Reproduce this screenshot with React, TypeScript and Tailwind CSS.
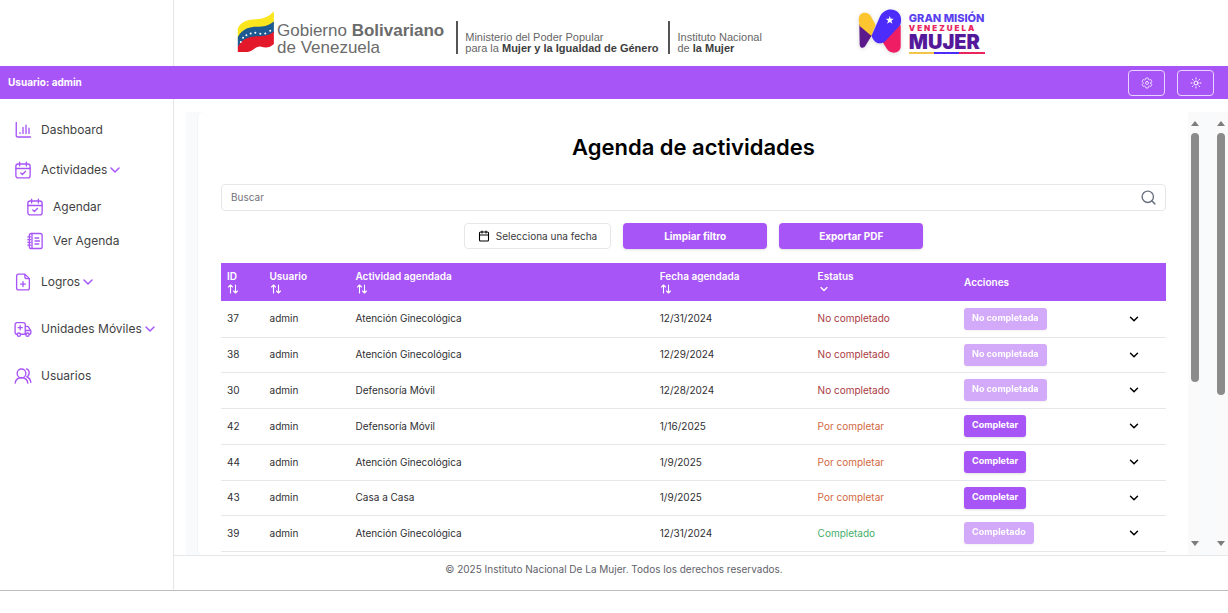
import type { ReactNode } from "react";
import { Calendar, ChevronDown, Search, Sun } from "lucide-react";
import { IoSettingsOutline } from "react-icons/io5";

type Status = "No completado" | "Por completar" | "Completado";

const rows: { id: number; activity: string; date: string; status: Status }[] = [
  { id: 37, activity: "Atención Ginecológica", date: "12/31/2024", status: "No completado" },
  { id: 38, activity: "Atención Ginecológica", date: "12/29/2024", status: "No completado" },
  { id: 30, activity: "Defensoría Móvil", date: "12/28/2024", status: "No completado" },
  { id: 42, activity: "Defensoría Móvil", date: "1/16/2025", status: "Por completar" },
  { id: 44, activity: "Atención Ginecológica", date: "1/9/2025", status: "Por completar" },
  { id: 43, activity: "Casa a Casa", date: "1/9/2025", status: "Por completar" },
  { id: 39, activity: "Atención Ginecológica", date: "12/31/2024", status: "Completado" },
];

const statusColor: Record<Status, string> = {
  "No completado": "text-[#a93b42]",
  "Por completar": "text-[#d2683f]",
  Completado: "text-[#43ad68]",
};

const actionLabel: Record<Status, string> = {
  "No completado": "No completada",
  "Por completar": "Completar",
  Completado: "Completado",
};

function LineIcon({ children }: { children: ReactNode }) {
  return (
    <svg
      viewBox="0 0 24 24"
      className="size-[18px] shrink-0 text-[#a855f7]"
      fill="none"
      stroke="currentColor"
      strokeWidth="1.8"
      strokeLinecap="round"
      strokeLinejoin="round"
      aria-hidden="true"
    >
      {children}
    </svg>
  );
}

const ChartIcon = () => (
  <LineIcon>
    <path d="M3 2v17.5a1.8 1.8 0 0 0 1.8 1.8H22M8 16.5v-1M12 16.5v-8M16 16.5v-11M20 16.5v-7" />
  </LineIcon>
);
const CalendarCheckIcon = () => (
  <LineIcon>
    <rect x="2.5" y="4" width="19" height="18.5" rx="3" />
    <path d="M2.5 10h19M7.5 1.5v5M16.5 1.5v5M9 16l2.2 2 4-4" />
  </LineIcon>
);
const NotebookIcon = () => (
  <LineIcon>
    <rect x="4.5" y="2" width="17" height="20" rx="2.5" />
    <path d="M8 2v20M2.5 6.5h3.5M2.5 10.2h3.5M2.5 13.8h3.5M2.5 17.5h3.5M12 8h5M12 12h6M12 16h5" />
  </LineIcon>
);
const FilePlusIcon = () => (
  <LineIcon>
    <path d="M14.5 1.5H6A2.5 2.5 0 0 0 3.5 4v16A2.5 2.5 0 0 0 6 22.5h12a2.5 2.5 0 0 0 2.5-2.5V7.5zM14.5 1.5V5A2.5 2.5 0 0 0 17 7.5h3.5M12 11.5V18M8.8 14.8h6.4" />
  </LineIcon>
);
const AmbulanceIcon = () => (
  <LineIcon>
    <path d="M4 19h-.5a2 2 0 0 1-2-2V6A2.5 2.5 0 0 1 4 3.5h8.5A2.5 2.5 0 0 1 15 6v13M9 19h7M15 8.5h2.5a2.5 2.5 0 0 1 2.1 1.2l2.6 4.3c.2.4.3.8.3 1.2V17a2 2 0 0 1-2 2M15 14h7M8.2 7.5V13M5.5 10.2H11" />
    <circle cx="6.5" cy="19.5" r="2.2" />
    <circle cx="18" cy="19.5" r="2.2" />
  </LineIcon>
);
const UsersIcon = () => (
  <LineIcon>
    <circle cx="10" cy="8.5" r="5.8" />
    <path d="M1.5 21.5c.6-4 3.8-7.2 8.5-7.2s7.9 3.2 8.5 7.2M16.5 2.5c4.8 1.3 5 8.5.5 10.5 3 1.2 5 4 5.5 7.5" />
  </LineIcon>
);

function NavItem({
  icon,
  label,
  expandable,
  className,
}: {
  icon: ReactNode;
  label: string;
  expandable?: boolean;
  className: string;
}) {
  const content = (
    <>
      {icon}
      <span className="ml-[9px] whitespace-nowrap">{label}</span>
      {expandable && <ChevronDown className="size-4 shrink-0 text-[#a855f7]" strokeWidth={2.2} />}
    </>
  );
  const base = "flex w-full items-center text-xs text-[#3f3f43] ";
  return (
    <li>
      {expandable ? (
        <button type="button" className={base + className}>{content}</button>
      ) : (
        <a href="#" className={base + className}>{content}</a>
      )}
    </li>
  );
}

function SortIcon() {
  return (
    <svg
      viewBox="0 0 24 24"
      className="size-3"
      fill="none"
      stroke="currentColor"
      strokeWidth="2.2"
      strokeLinecap="round"
      strokeLinejoin="round"
      aria-hidden="true"
    >
      <path d="M7 20V4M3 8l4-4 4 4M17 4v16M21 16l-4 4-4-4" />
    </svg>
  );
}

function HeaderCell({ label, icon }: { label: string; icon?: ReactNode }) {
  return (
    <th scope="col" className="px-1.5 text-left align-middle font-semibold">
      {icon ? (
        <button type="button" className="flex flex-col items-start leading-[13px]">
          <span>{label}</span>
          {icon}
        </button>
      ) : (
        label
      )}
    </th>
  );
}

function ScrollTrack({ thumb }: { thumb: string }) {
  return (
    <div aria-hidden="true" className="flex w-[14px] shrink-0 flex-col items-center bg-[#fafafa] pt-[9px] pb-[9px]">
      <svg viewBox="0 0 8 5" className="h-[5px] w-2 fill-[#7c7c7c]"><path d="M4 0 8 5H0z" /></svg>
      <div className="mt-[7px] flex-1">
        <div className={"w-2 rounded-full bg-[#8b8b8b] " + thumb} />
      </div>
      <svg viewBox="0 0 8 5" className="h-[5px] w-2 fill-[#7c7c7c]"><path d="M4 5 0 0h8z" /></svg>
    </div>
  );
}

function Flag() {
  return (
    <svg viewBox="36 30 114 130" className="h-[43px] w-[38px] shrink-0" aria-hidden="true">
      <path fill="#fbe51d" d="M38 86c10-22 30-27 54-28 24-1 38-6 55-24v42c-30 14-70 10-109 44z" />
      <path fill="#1d5a92" d="M38 112c14-27 40-31 56-31 22 0 38-4 53-16v34c-22 16-40 12-60 14-22 2-36 14-49 31z" />
      <path fill="#e3182a" d="M38 142c12-24 32-31 50-32 22-2 40 2 59-15v38c-12 12-26 12-38 8-16-4-26 15-42 16H38z" />
      <g fill="#fff">
        <circle cx="47" cy="127" r="3" /><circle cx="54" cy="114" r="3" />
        <circle cx="64" cy="106" r="3" /><circle cx="77" cy="101" r="3" />
        <circle cx="91" cy="99" r="3" /><circle cx="106" cy="102" r="3" />
        <circle cx="121" cy="101" r="3" /><circle cx="136" cy="93" r="3" />
      </g>
    </svg>
  );
}

function MissionMark() {
  return (
    <svg viewBox="56 22 136 138" className="h-[46px] w-[45px] shrink-0 drop-shadow-sm" aria-hidden="true">
      <path fill="#5b1a8c" d="M60 70 98 104l-19 31c-6 11-18 8-18-5z" />
      <path fill="#fdc52f" d="M61 76C54 48 62 36 76 36c11 0 17 6 21 14l12 22-12 34z" />
      <path fill="#ef1d63" d="M185 72v66c0 20-30 26-42 7l-16-26z" />
      <path fill="#4c2cfa" d="m97 105 26-59c7-13 19-20 31-20 22 0 34 16 32 36-1 8-3 12-8 18l-40 42c-16 13-34 5-41-17z" />
      <path fill="#fff" d="m152 46 3 8h9l-7 6 3 9-8-5-8 5 3-9-7-6h9z" />
    </svg>
  );
}

export default function App() {
  return (
    <div className="flex h-screen flex-col bg-white pb-[22px] font-['Inter',sans-serif]">
      <div className="flex min-h-0 flex-1 flex-col border-b border-[#bdbdbd]">
        <header className="flex h-[66px] shrink-0">
          <div className="w-[174px] shrink-0 border-r border-gray-200" />
          <div className="flex items-start pl-[63px] font-['Liberation_Sans',Arial,sans-serif] whitespace-nowrap">
            <div className="flex pt-2.5">
              <Flag />
              <p className="ml-0.5 pt-3 text-[17px] leading-[17px] text-[#6b6b6b]">
                Gobierno <b>Bolivariano</b>
                <br />
                de Venezuela
              </p>
            </div>
            <p className="mt-[21px] ml-3 border-l-2 border-[#555] pt-[11px] pl-[7px] text-[11px] leading-[11px] text-[#666]">
              Ministerio del Poder Popular
              <br />
              para la <b className="text-[#3d3d3d]">Mujer y la Igualdad de Género</b>
            </p>
            <p className="mt-[21px] ml-2.5 border-l-2 border-[#555] pt-[11px] pl-[7px] text-[11px] leading-[11px] text-[#666]">
              Instituto Nacional
              <br />
              de <b className="text-[#3d3d3d]">la Mujer</b>
            </p>
            <div className="ml-24 flex pt-2 font-['Inter',sans-serif]">
              <MissionMark />
              <div className="ml-1.5 flex flex-col pt-1">
                <span className="text-[11px] leading-3 font-extrabold text-[#5a40ee]">GRAN MISIÓN</span>
                <span className="text-[8px] leading-2 font-black tracking-[2px] text-[#e8255f]">VENEZUELA</span>
                <span className="text-[20px] leading-5 font-black text-[#54189a]">MUJER</span>
                <span className="flex h-0.5">
                  <span className="flex-1 bg-[#f2c54a]" />
                  <span className="flex-1 bg-[#4c2cfa]" />
                  <span className="flex-1 bg-[#e8255f]" />
                </span>
              </div>
            </div>
          </div>
        </header>

        <div className="flex h-[33px] shrink-0 items-center bg-[#a855f7] pr-3.5 pl-2 text-white">
          <span className="flex-1 text-[10px] font-bold">Usuario: admin</span>
          <div className="flex gap-3">
            <button type="button" aria-label="Configuración" className="flex h-[26px] w-[37px] items-center justify-center rounded border border-purple-200">
              <IoSettingsOutline className="size-3" />
            </button>
            <button type="button" aria-label="Cambiar tema" className="flex h-[26px] w-[37px] items-center justify-center rounded border border-purple-200">
              <Sun className="size-3" />
            </button>
          </div>
        </div>

        <div className="flex min-h-0 flex-1">
          <nav className="w-[174px] shrink-0 border-r border-gray-200 pt-[11px]">
            <ul>
              <NavItem className="h-10 pl-3.5" icon={<ChartIcon />} label="Dashboard" />
              <NavItem className="h-10 pl-3.5" icon={<CalendarCheckIcon />} label="Actividades" expandable />
              <NavItem className="h-[34px] pl-[26px]" icon={<CalendarCheckIcon />} label="Agendar" />
              <NavItem className="h-[34px] pl-[26px]" icon={<NotebookIcon />} label="Ver Agenda" />
              <NavItem className="h-[47px] pl-3.5" icon={<FilePlusIcon />} label="Logros" expandable />
              <NavItem className="h-[47px] pl-3.5" icon={<AmbulanceIcon />} label="Unidades Móviles" expandable />
              <NavItem className="h-[47px] pl-3.5" icon={<UsersIcon />} label="Usuarios" />
            </ul>
          </nav>

          <div className="flex min-w-0 flex-1 flex-col">
            <div className="flex min-h-0 flex-1 pt-[13px] pl-3">
              <div className="flex min-w-0 flex-1 bg-[#f8fafc] pr-3 pl-[11px]">
                <main className="flex min-w-0 flex-1 overflow-hidden rounded-md border-l border-gray-100 bg-white">
                  <div className="min-w-0 flex-1 pr-[22px] pl-[23px]">
                    <h1 className="mt-[19px] text-center text-[22px] leading-8 font-semibold text-black">Agenda de actividades</h1>

                    <label className="mt-[21px] flex h-[27px] items-center rounded border border-gray-200 pr-2 pl-[9px]">
                      <input
                        type="text"
                        aria-label="Buscar"
                        placeholder="Buscar"
                        className="min-w-0 flex-1 text-[10px] outline-none placeholder:text-[#73737a]"
                      />
                      <Search className="size-[17px] text-gray-500" strokeWidth={2} />
                    </label>

                    <div className="mt-3 flex justify-center gap-3">
                      <button type="button" className="flex h-[26px] items-center gap-1.5 rounded border border-gray-200 px-[13px] text-[10px] text-[#3a3a3d]">
                        <Calendar className="size-3 text-black" strokeWidth={2.2} />
                        Selecciona una fecha
                      </button>
                      <button type="button" className="h-[26px] w-36 rounded bg-[#a855f7] text-[10px] font-bold text-white shadow-sm">
                        Limpiar filtro
                      </button>
                      <button type="button" className="h-[26px] w-36 rounded bg-[#a855f7] text-[10px] font-bold text-white shadow-sm">
                        Exportar PDF
                      </button>
                    </div>

                    <table className="mt-3.5 w-full table-fixed text-[10px] text-[#2f2f33]">
                      <colgroup>
                        <col className="w-[4.5%]" />
                        <col className="w-[9.1%]" />
                        <col className="w-[32.2%]" />
                        <col className="w-[16.7%]" />
                        <col className="w-[15.5%]" />
                        <col className="w-[15.3%]" />
                        <col className="w-[6.7%]" />
                      </colgroup>
                      <thead className="bg-[#a855f7] text-white">
                        <tr className="h-[38px]">
                          <HeaderCell label="ID" icon={<SortIcon />} />
                          <HeaderCell label="Usuario" icon={<SortIcon />} />
                          <HeaderCell label="Actividad agendada" icon={<SortIcon />} />
                          <HeaderCell label="Fecha agendada" icon={<SortIcon />} />
                          <HeaderCell label="Estatus" icon={<ChevronDown className="size-3" strokeWidth={2.5} />} />
                          <HeaderCell label="Acciones" />
                          <td />
                        </tr>
                      </thead>
                      <tbody>
                        {rows.map((row) => (
                          <tr key={row.id} className="h-9 border-b border-gray-200 nth-[4n+2]:h-[35px]">
                            <td className="px-1.5">{row.id}</td>
                            <td className="px-1.5">admin</td>
                            <td className="px-1.5">{row.activity}</td>
                            <td className="px-1.5">{row.date}</td>
                            <td className={"px-1.5 " + statusColor[row.status]}>{row.status}</td>
                            <td className="px-1.5">
                              <button
                                type="button"
                                disabled={row.status !== "Por completar"}
                                className="block h-[22px] rounded-[3px] bg-[#a855f7] px-2 pb-0.5 text-[9px] font-bold whitespace-nowrap text-white shadow-sm disabled:opacity-50"
                              >
                                {actionLabel[row.status]}
                              </button>
                            </td>
                            <td>
                              <button type="button" aria-label="Ver detalles" className="mx-auto block">
                                <ChevronDown className="size-3.5 text-black" strokeWidth={2.5} />
                              </button>
                            </td>
                          </tr>
                        ))}
                      </tbody>
                    </table>
                  </div>
                  <ScrollTrack thumb="h-[249px]" />
                </main>
              </div>
              <ScrollTrack thumb="h-[262px]" />
            </div>
            <footer className="h-[35px] shrink-0 border-t border-gray-200 pt-1.5 pr-[174px] text-center text-[10px] leading-[14px] text-[#62626a]">
              © 2025 Instituto Nacional De La Mujer. Todos los derechos reservados.
            </footer>
          </div>
        </div>
      </div>
    </div>
  );
}
